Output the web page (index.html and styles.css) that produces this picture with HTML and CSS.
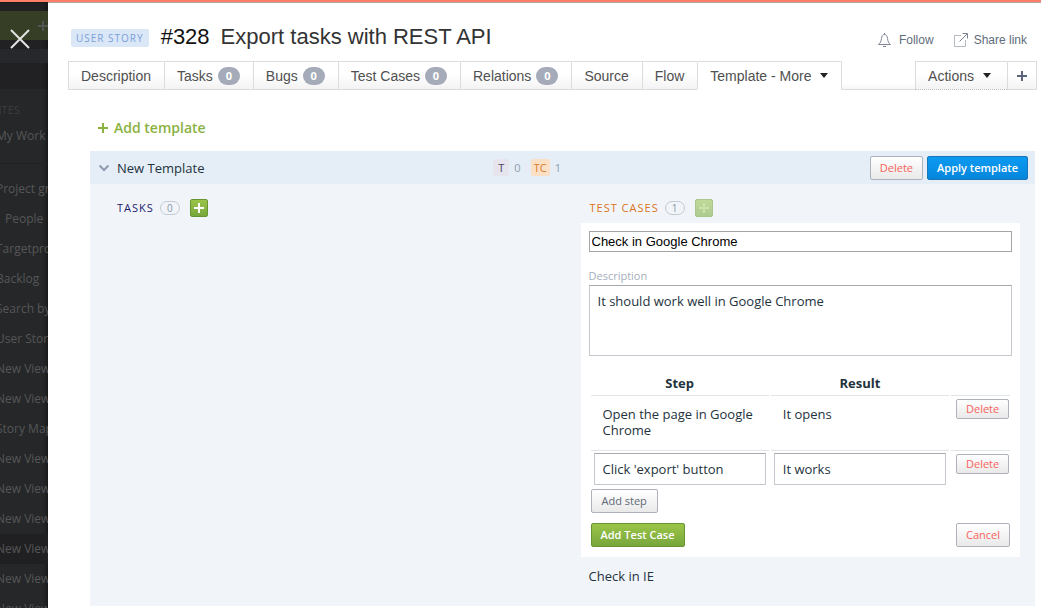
FILE: index.html
```html
<!DOCTYPE html>
<html lang="en">
<head>
<meta charset="utf-8">
<meta name="viewport" content="width=device-width, initial-scale=1">
<title>#328 Export tasks with REST API</title>
<link rel="stylesheet" href="styles.css">
</head>
<body>
<div class="app">
  <aside class="sidebar">
    <div class="sidebar-create"><svg width="10" height="10" viewBox="0 0 10 10"><path d="M5 0v10M0 5h10" stroke="#505550" stroke-width="2"/></svg></div>
    <div class="sidebar-search"></div>
    <nav class="sidebar-nav">
      <h2 class="sidebar-heading">FAVORITES</h2>
      <a class="sidebar-link" href="#">My Work</a>
      <hr class="sidebar-rule">
      <a class="sidebar-link" href="#">Project group</a>
      <a class="sidebar-link sidebar-link-nested" href="#">People</a>
      <a class="sidebar-link" href="#">Targetprocess</a>
      <a class="sidebar-link" href="#">Backlog</a>
      <a class="sidebar-link" href="#">Search by</a>
      <a class="sidebar-link" href="#">User Stories</a>
      <a class="sidebar-link" href="#">New View</a>
      <a class="sidebar-link" href="#">New View</a>
      <a class="sidebar-link" href="#">Story Map</a>
      <a class="sidebar-link" href="#">New View</a>
      <a class="sidebar-link" href="#">New View</a>
      <a class="sidebar-link" href="#">New View</a>
      <a class="sidebar-link sidebar-link-current" href="#">New View</a>
      <a class="sidebar-link" href="#">New View</a>
      <a class="sidebar-link" href="#">New View</a>
    </nav>
    <button class="close" type="button" aria-label="Close"><svg width="20" height="20" viewBox="0 0 20 20"><path d="M1 1l18 18M19 1L1 19" stroke="#e4e4e4" stroke-width="2"/></svg></button>
  </aside>

  <main class="panel">
    <header class="header">
      <span class="entity-tag">USER STORY</span>
      <h1 class="title"><span class="title-id">#328</span><span>Export tasks with REST API</span></h1>
      <div class="header-links">
        <a class="header-link" href="#"><svg width="13" height="14" viewBox="0 0 13 14" fill="none" stroke="#7d8494"><path d="M6.500 0v2M.5 11.500h12C10.500 10 10 8.500 9.500 5.500 9.200 3 8.300 1.500 6.500 1.500S3.800 3 3.500 5.500C3 8.500 2.500 10 .5 11.500zM5 13.500h3"/></svg>Follow</a>
        <a class="header-link header-link-share" href="#"><svg width="14" height="14" viewBox="0 0 14 14" fill="none"><path d="M7 2.500H.5v11h11V7" stroke="#b5b9c2"/><path d="M5.500 8.500l7.500-7.500M8.500.5h5v5" stroke="#7d8494"/></svg>Share link</a>
      </div>
    </header>

    <nav class="tabs">
      <a class="tab" href="#">Description</a>
      <a class="tab" href="#">Tasks<span class="tab-count">0</span></a>
      <a class="tab" href="#">Bugs<span class="tab-count">0</span></a>
      <a class="tab" href="#">Test Cases<span class="tab-count">0</span></a>
      <a class="tab" href="#">Relations<span class="tab-count">0</span></a>
      <a class="tab" href="#">Source</a>
      <a class="tab" href="#">Flow</a>
      <a class="tab tab-active" href="#">Template - More<span class="caret"></span></a>
      <span class="tabs-gap"></span>
      <button class="tab tab-actions" type="button">Actions<span class="caret"></span></button>
      <button class="tab tab-plus" type="button" aria-label="Add"><svg width="10" height="10" viewBox="0 0 10 10"><path d="M5 0v10M0 5h10" stroke="#5b6478" stroke-width="2"/></svg></button>
    </nav>

    <div class="content">
      <button class="add-template" type="button"><svg width="10" height="10" viewBox="0 0 10 10"><path d="M5 0v10M0 5h10" stroke="#8ab23f" stroke-width="2"/></svg>Add template</button>

      <section class="template">
        <div class="template-head">
          <h2 class="template-name"><svg width="12" height="8" viewBox="0 0 12 8"><path d="M1.500 1.500L6 6l4.500-4.500" fill="none" stroke="#8d9bb0" stroke-width="2"/></svg>New Template</h2>
          <div class="counts">
            <span class="kind kind-task">T</span><span class="kind-count">0</span>
            <span class="kind kind-case">TC</span><span class="kind-count">1</span>
          </div>
          <div class="template-actions">
            <button class="btn btn-danger" type="button">Delete</button>
            <button class="btn btn-primary" type="button">Apply template</button>
          </div>
        </div>

        <div class="columns">
          <div class="column">
            <div class="column-head">
              <h3 class="column-title">TASKS</h3><span class="pill">0</span>
              <button class="add" type="button" aria-label="Add task"><svg width="10" height="10" viewBox="0 0 10 10"><path d="M5 0v10M0 5h10" stroke="#fff" stroke-width="2"/></svg></button>
            </div>
          </div>

          <div class="column">
            <div class="column-head">
              <h3 class="column-title column-title-case">TEST CASES</h3><span class="pill">1</span>
              <button class="add add-off" type="button" aria-label="Add test case" disabled><svg width="10" height="10" viewBox="0 0 10 10"><path d="M5 0v10M0 5h10" stroke="#cbe2ad" stroke-width="2"/></svg></button>
            </div>
            <form class="card">
              <input class="name" type="text" aria-label="Test case name" value="Check in Google Chrome">
              <label class="label" for="description">Description</label>
              <textarea class="description" id="description">It should work well in Google Chrome</textarea>
              <table class="steps">
                <thead>
                  <tr><th>Step</th><th>Result</th><td class="steps-tools"></td></tr>
                </thead>
                <tbody>
                  <tr class="step-row">
                    <td>Open the page in Google Chrome</td>
                    <td>It opens</td>
                    <td class="steps-tools"><button class="btn btn-small btn-danger" type="button">Delete</button></td>
                  </tr>
                  <tr class="step-edit">
                    <td><input class="step-input" type="text" aria-label="Step" value="Click 'export' button"></td>
                    <td><input class="step-input" type="text" aria-label="Result" value="It works"></td>
                    <td class="steps-tools"><button class="btn btn-small btn-danger" type="button">Delete</button></td>
                  </tr>
                </tbody>
              </table>
              <div class="form-row"><button class="btn" type="button">Add step</button></div>
              <div class="form-row form-row-submit">
                <button class="btn btn-success" type="button">Add Test Case</button>
                <button class="btn btn-danger" type="button">Cancel</button>
              </div>
            </form>
            <p class="case">Check in IE</p>
          </div>
        </div>
      </section>
    </div>
  </main>
</div>
</body>
</html>
```

FILE: styles.css
```css
* { box-sizing: border-box; }

body {
  margin: 0;
  background: #fff;
  color: #1e333d;
  font: 13px/16px "Open Sans", "Noto Sans", sans-serif;
}

h1, h2, h3, p { margin: 0; font-weight: 400; }
a { color: inherit; text-decoration: none; }
button, input, textarea { margin: 0; font: inherit; color: inherit; border-radius: 0; }
svg { flex: none; display: block; }

.app {
  display: flex;
  height: 100vh;
  overflow: hidden;
  border-top: 2px solid #ff7e68;
}

/* Dimmed sidebar behind the panel */
.sidebar {
  position: relative;
  flex: none;
  width: 48px;
  overflow: hidden;
  padding-top: 8px;
  border-top: 1px solid #1a1a1b;
  background: linear-gradient(#212123 86px, #262729 86px);
  box-shadow: inset -4px 0 4px -3px #111;
  color: #555657;
}
.sidebar-create {
  display: flex;
  height: 29px;
  margin-bottom: 9px;
  padding: 10px 0 0 38px;
  background: #363e26;
}
.sidebar-search { height: 14px; margin-bottom: 39px; background: #27282b; }
.sidebar-nav { width: 120px; }
.sidebar-heading { margin: 0 0 3px -36px; font-size: 11px; line-height: 16px; color: #3c3d3f; }
.sidebar-link {
  display: block;
  text-indent: -4px;
  font-size: 12px;
  line-height: 30px;
  white-space: nowrap;
}
.sidebar-link-nested { text-indent: 5px; }
.sidebar-link-current { background: #202022; }
.sidebar-rule { height: 1px; margin: 12px 0 10px; border: 0; background: #202123; }
.close {
  position: absolute;
  top: 26px;
  left: 10px;
  padding: 0;
  border: 0;
  background: none;
}

.panel { flex: 1; min-width: 0; border-top: 1px solid #b3a9a9; }

.header {
  display: flex;
  align-items: center;
  height: 58px;
  padding: 12px 14px 0 23px;
}
.entity-tag {
  padding: 1px 5px;
  border-radius: 2px;
  background: #dae7f6;
  color: #7b9fdb;
  font-size: 10px;
  letter-spacing: 1px;
  line-height: 16px;
}
.title {
  display: flex;
  gap: 11px;
  margin: 0 0 3px 12px;
  font: 22px/26px "Liberation Sans", Arial, sans-serif;
  color: #333;
}
.title-id { color: #111; }
.header-links { display: flex; gap: 20px; margin: 3px 0 0 auto; }
.header-link {
  display: flex;
  align-items: center;
  gap: 8px;
  font: 12px/16px "Liberation Sans", Arial, sans-serif;
  color: #5e6d78;
}
.header-link-share { gap: 6px; }

.tabs { display: flex; padding: 0 4px 0 20px; }
.tab {
  display: flex;
  align-items: center;
  height: 29px;
  padding: 0 13px 0 12px;
  border: 1px solid #dcdcdc;
  border-right-width: 0;
  background: linear-gradient(#fff 45%, #f3f3f3);
  color: #505050;
  font: 14px/20px "Liberation Sans", Arial, sans-serif;
  white-space: nowrap;
}
.tab-active { border-right-width: 1px; border-bottom-color: #fff; background: #fff; border-radius: 2px 2px 0 0; }
.tab-count {
  width: 22px;
  margin-left: 5px;
  border-radius: 9px;
  background: #a5abb8;
  color: #fff;
  font: 700 11px/18px "Open Sans", sans-serif;
  text-align: center;
}
.caret { margin-left: 9px; border: 4px solid transparent; border-top: 5px solid #222; border-bottom: 0; }
.tabs-gap { flex: 1; border-bottom: 1px solid #dcdcdc; background: linear-gradient(#fff 80%, #f5f5f5); }
.tab-actions { border-bottom-style: dotted; border-bottom-color: #bbb; padding-right: 16px; }
.tab-plus { padding: 0 9px; border-right-width: 1px; }

.content { padding: 28px 6px 0 42px; }
.add-template {
  display: flex;
  align-items: center;
  gap: 6px;
  margin: 0 0 13px 8px;
  padding: 0;
  border: 0;
  background: none;
  color: #8ab23f;
  font-size: 14px;
  font-weight: 600;
  line-height: 20px;
}

.template { background: #f1f5fa; }
.template-head {
  display: grid;
  grid-template-columns: 43% auto 1fr;
  align-items: center;
  height: 33px;
  padding-right: 7px;
  background: #e5eef7;
}
.template-name { display: flex; align-items: center; gap: 7px; padding-left: 8px; font-size: 13px; line-height: 20px; }
.counts { display: flex; align-items: center; gap: 5px; color: #8c9dae; font-size: 11px; }
.kind { min-width: 16px; padding: 0 3px; border-radius: 2px; line-height: 17px; text-align: center; }
.kind-task { background: #e6e4ed; color: #504466; }
.kind-case { margin-left: 5px; background: #fbe0c6; color: #d87b28; }
.template-actions { display: flex; justify-content: flex-end; gap: 4px; }

.btn {
  padding: 0 10px;
  border: 1px solid #adb2bb;
  border-radius: 2px;
  background: linear-gradient(#fff, #e9e9e9);
  color: #5f6875;
  font-size: 11px;
  line-height: 22px;
  white-space: nowrap;
}
.btn-danger { padding: 0 9px; color: #f8625b; }
.btn-primary { padding: 0 9px; border-color: #1b76b8; background: linear-gradient(#0c9af2, #0586dc); color: #fff; font-weight: 600; }
.btn-success { padding: 0 9px; border-color: #67952f; background: linear-gradient(#9bc548, #78a63c); color: #fff; font-weight: 600; }
.btn-small { display: block; line-height: 18px; }

.columns { display: grid; grid-template-columns: 1fr 1fr; }
.column { min-width: 0; padding: 15px 15px 22px 18px; }
.column-head { display: flex; align-items: center; height: 18px; margin-bottom: 6px; padding-left: 9px; }
.column-title { color: #26216b; font-size: 11px; letter-spacing: 1px; line-height: 16px; }
.column-title-case { color: #dc7420; }
.pill {
  min-width: 20px;
  margin: 0 10px 0 6px;
  padding: 0 6px;
  border: 1px solid #c4cad2;
  border-radius: 7px;
  color: #8c95a2;
  font-size: 10px;
  line-height: 12px;
  text-align: center;
}
.add {
  display: flex;
  align-items: center;
  justify-content: center;
  width: 18px;
  height: 18px;
  padding: 0;
  border: 1px solid #67952f;
  border-radius: 2px;
  background: linear-gradient(#9bc548, #78a63c);
}
.add-off { border-color: #a9c58a; background: linear-gradient(#bfd997, #aecb90); }

.card { padding: 8px 8px 10px; background: #fff; }
.name {
  display: block;
  width: 100%;
  height: 21px;
  padding: 0 2px;
  border: 1px solid #a5a5a5;
  background: #fff;
  color: #000;
  font: 13px/16px "Liberation Sans", Arial, sans-serif;
}
.label { display: block; margin: 15px 0 1px; color: #a5afbc; font-size: 11px; line-height: 17px; }
.description {
  display: block;
  width: 100%;
  height: 71px;
  padding: 7px 8px;
  border: 1px solid #c6cad0;
  border-top-color: #a5a8ac;
  background: #fff;
  resize: none;
}

.steps { width: 100%; margin-top: 14px; border-spacing: 2px; table-layout: fixed; }
.steps th { padding: 2px 0 3px; border-bottom: 1px solid #e2e4e6; font-weight: 700; line-height: 18px; }
.steps td { padding: 0; vertical-align: top; }
.steps thead .steps-tools { width: 59px; border-bottom: 1px solid #e2e4e6; }
.step-row td { padding: 8px 12px 12px; border-bottom: 1px solid #e2e4e6; }
.step-edit td { padding: 0 3px; }
.steps tbody .steps-tools { padding: 1px 0 0 5px; }
.step-input {
  display: block;
  width: 100%;
  height: 32px;
  padding: 0 8px;
  border: 1px solid #c6cad0;
  border-top-color: #a5a8ac;
  background: #fff;
}

.form-row { display: flex; justify-content: space-between; margin: 2px 2px 0; }
.form-row-submit { margin-top: 10px; }
.case { margin: 11px 8px 0; }
```
